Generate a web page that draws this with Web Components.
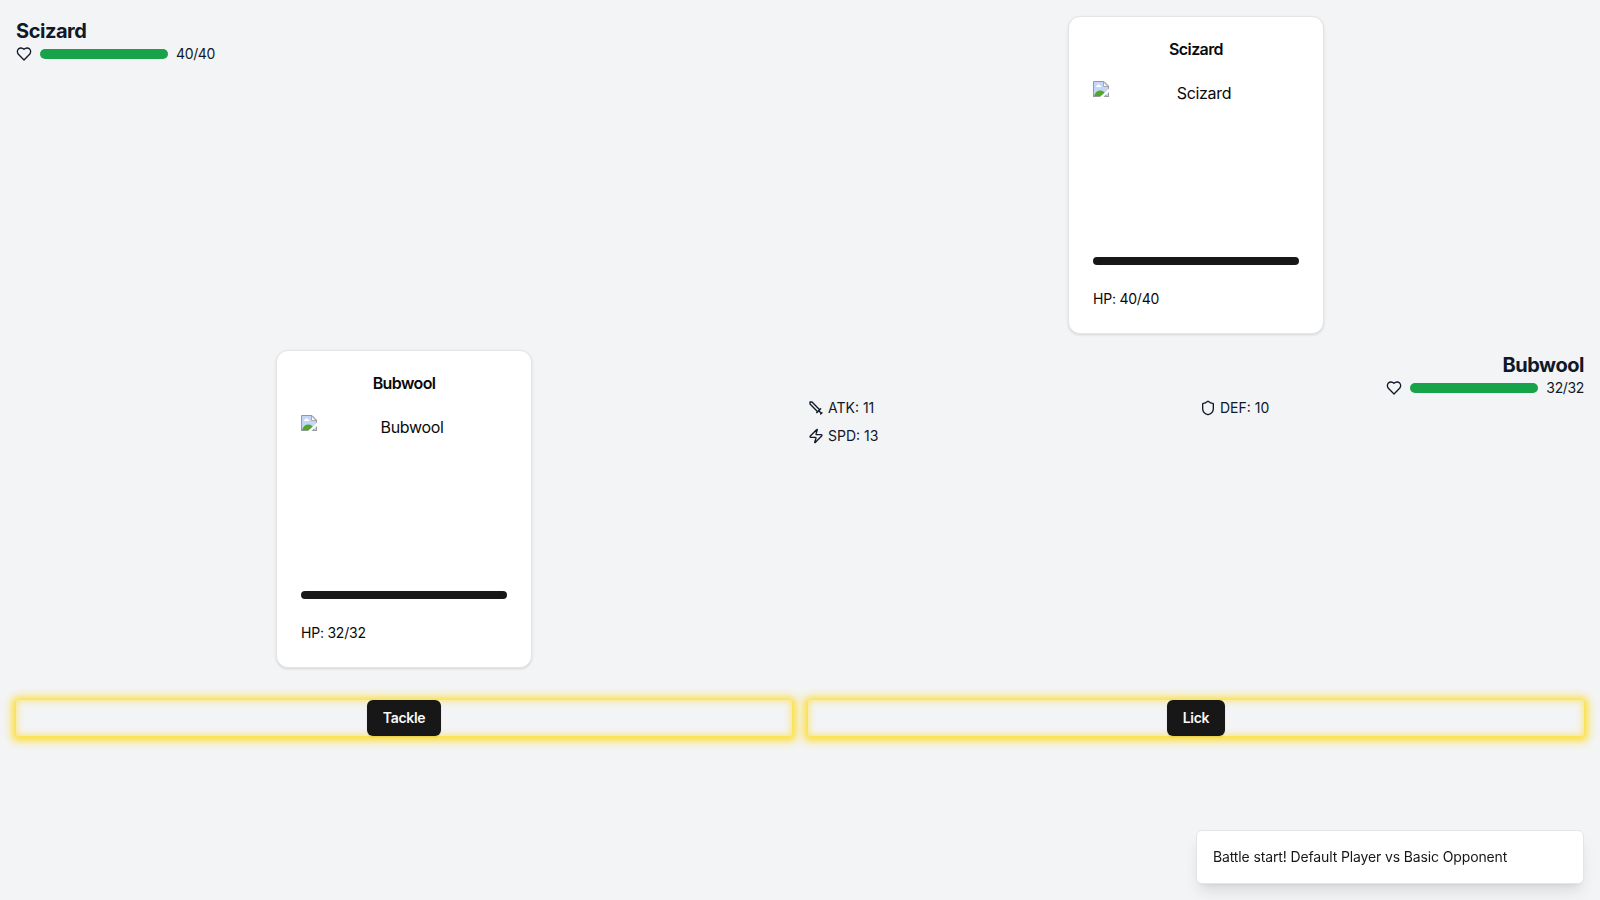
<!DOCTYPE html>
<html lang="en">
<head>
<meta charset="utf-8">
<title>Battle</title>
<style>
html,body{margin:0;height:100%}
body{font:16px/24px Inter,"Liberation Sans",sans-serif;color:#0a0a0a;background:#f3f4f6;overflow:hidden}
</style>
</head>
<body>
<battle-scene></battle-scene>
<script>
const define = (name, html, init) => {
  const t = document.createElement('template');
  t.innerHTML = html;
  customElements.define(name, class extends HTMLElement {
    constructor() {
      super();
      this.attachShadow({ mode: 'open' }).append(t.content.cloneNode(true));
    }
    connectedCallback() { if (init) init(this, this.shadowRoot); }
  });
};

const ICONS = {
  heart: '<path d="M19 14c1.49-1.46 3-3.21 3-5.5A5.5 5.5 0 0 0 16.5 3c-1.76 0-3 .5-4.5 2-1.5-1.5-2.74-2-4.5-2A5.5 5.5 0 0 0 2 8.5c0 2.3 1.5 4.05 3 5.5l7 7Z"/>',
  sword: '<polyline points="14.5 17.5 3 6 3 3 6 3 17.5 14.5"/><line x1="13" x2="19" y1="19" y2="13"/><line x1="16" x2="20" y1="16" y2="20"/><line x1="19" x2="21" y1="21" y2="19"/>',
  shield: '<path d="M20 13c0 5-3.5 7.5-7.66 8.95a1 1 0 0 1-.67-.01C7.5 20.5 4 18 4 13V6a1 1 0 0 1 1-1c2 0 4.5-1.2 6.24-2.72a1.17 1.17 0 0 1 1.52 0C14.51 3.81 17 5 19 5a1 1 0 0 1 1 1z"/>',
  zap: '<path d="M4 14a1 1 0 0 1-.78-1.63l9.9-10.2a.5.5 0 0 1 .86.46l-1.92 6.02A1 1 0 0 0 13 10h7a1 1 0 0 1 .78 1.63l-9.9 10.2a.5.5 0 0 1-.86-.46l1.92-6.02A1 1 0 0 0 11 14z"/>'
};
define('line-icon', `<style>
:host{display:block;width:16px;height:16px;flex:none}
svg{display:block;width:16px;height:16px;fill:none;stroke:currentColor;stroke-width:2;stroke-linecap:round;stroke-linejoin:round}
</style><svg viewBox="0 0 24 24"></svg>`, (el, r) => {
  const p = ICONS[el.getAttribute('name')];
  if (p) r.querySelector('svg').innerHTML = p;
});

define('health-status', `<style>
:host{display:flex;flex-direction:column;align-items:flex-start;color:#111827}
:host([align=end]){align-items:flex-end}
h2{margin:0;padding-top:2px;font-size:20px;line-height:26px;font-weight:700;letter-spacing:-.45px}
.row{display:flex;align-items:center;gap:8px;font-size:14px;line-height:20px}
.hp{letter-spacing:-.35px}
.bar{width:128px;height:10px;border-radius:5px;background:#16a34a}
</style><h2><slot></slot></h2><div class="row"><line-icon name="heart"></line-icon><div class="bar"></div><div class="hp"><slot name="hp"></slot></div></div>`);

define('missing-picture', `<style>
:host{display:flex;height:160px;align-items:flex-start}
svg{display:block;width:16px;height:16px;flex:none}
span{flex:1;text-align:center;letter-spacing:-.34px}
</style><svg viewBox="0 0 16 16"><path d="M.5.5H11l4.500 4.500v10.500H.5z" fill="#c3d5f8"/><path d="M3 6h5.500c0-1.200-.8-1.700-1.600-1.600C6.400 3 4.600 3 4.300 4.400 3.400 4.400 3 5.100 3 6z" fill="#fff"/><path d="M1 15c1.300-3.600 3.600-5.400 6.200-5.400s5 1.800 6.300 5.400z" fill="#4fa826"/><path d="M.5 16V.5H11l4.500 4.500v11M0 15.500h16" fill="none" stroke="#999"/><path d="M10.500 1v4.500H15z" fill="#fff" stroke="#999" stroke-width=".8"/><path d="M7 16l2-2 3.500-3L16 7.500v3.500l-5.500 5z" fill="#fff"/></svg><span><slot></slot></span>`);

define('creature-card', `<style>
:host{display:flex;flex-direction:column;box-sizing:border-box;width:256px;padding:24px;border:1px solid #e5e5e5;border-radius:12px;background:#fff;box-shadow:0 1px 3px rgba(0,0,0,.1),0 1px 2px -1px rgba(0,0,0,.1);color:#0a0a0a}
h3{margin:0 0 24px;text-align:center;font-size:16px;line-height:16px;font-weight:600;letter-spacing:-.6px}
.bar{height:8px;border-radius:4px;background:#171717;margin:16px 0 24px}
.hp{font-size:14px;line-height:20px;letter-spacing:-.22px}
</style><h3></h3><missing-picture></missing-picture><div class="bar"></div><div class="hp"><slot></slot></div>`, (el, r) => {
  r.querySelector('h3').textContent = r.querySelector('missing-picture').textContent = el.getAttribute('name');
});

define('stat-item', `<style>
:host{display:flex;align-items:center;gap:4px;font-size:14px;line-height:20px}
</style><line-icon></line-icon><span><slot></slot></span>`, (el, r) => {
  const i = r.querySelector('line-icon');
  i.setAttribute('name', el.getAttribute('icon'));
  i.connectedCallback();
});

define('skill-button', `<style>
:host{display:flex;justify-content:center;height:36px;border-radius:2px;box-shadow:0 1px 10px 4px rgba(253,224,71,.95),0 1px 5px 2px rgba(250,218,50,.65),inset 0 0 7px 1px rgba(253,224,71,.75)}
button{height:36px;padding:0 16px;border:0;border-radius:6px;background:#171717;color:#fafafa;font:600 14px/20px Inter,"Liberation Sans",sans-serif;letter-spacing:-.3px;box-shadow:0 1px 2px rgba(0,0,0,.1)}
</style><button><slot></slot></button>`);

define('toast-message', `<style>
:host{display:block;box-sizing:border-box;width:388px;padding:16px;border:1px solid #e5e5e5;border-radius:6px;background:#fff;color:#171717;font-size:14px;line-height:20px;letter-spacing:-.13px;box-shadow:0 10px 15px -3px rgba(0,0,0,.1),0 4px 6px -4px rgba(0,0,0,.1)}
</style><slot></slot>`);

define('battle-scene', `<style>
:host{display:grid;grid-template-columns:1fr 1fr;gap:16px;padding:16px;align-items:start}
creature-card{justify-self:center}
.stats{display:grid;grid-template-columns:1fr 1fr;gap:8px;color:#111827}
.actions{grid-column:1/-1;display:grid;grid-template-columns:1fr 1fr;gap:16px;margin-top:16px}
toast-message{position:fixed;right:16px;bottom:16px}
</style>
<health-status>Scizard<span slot="hp">40/40</span></health-status>
<creature-card name="Scizard">HP: 40/40</creature-card>
<creature-card name="Bubwool">HP: 32/32</creature-card>
<div><health-status align="end">Bubwool<span slot="hp">32/32</span></health-status>
<div class="stats"><stat-item icon="sword">ATK: 11</stat-item><stat-item icon="shield">DEF: 10</stat-item><stat-item icon="zap">SPD: 13</stat-item></div></div>
<div class="actions"><skill-button>Tackle</skill-button><skill-button>Lick</skill-button></div>
<toast-message>Battle start! Default Player vs Basic Opponent</toast-message>`);
</script>
</body>
</html>
